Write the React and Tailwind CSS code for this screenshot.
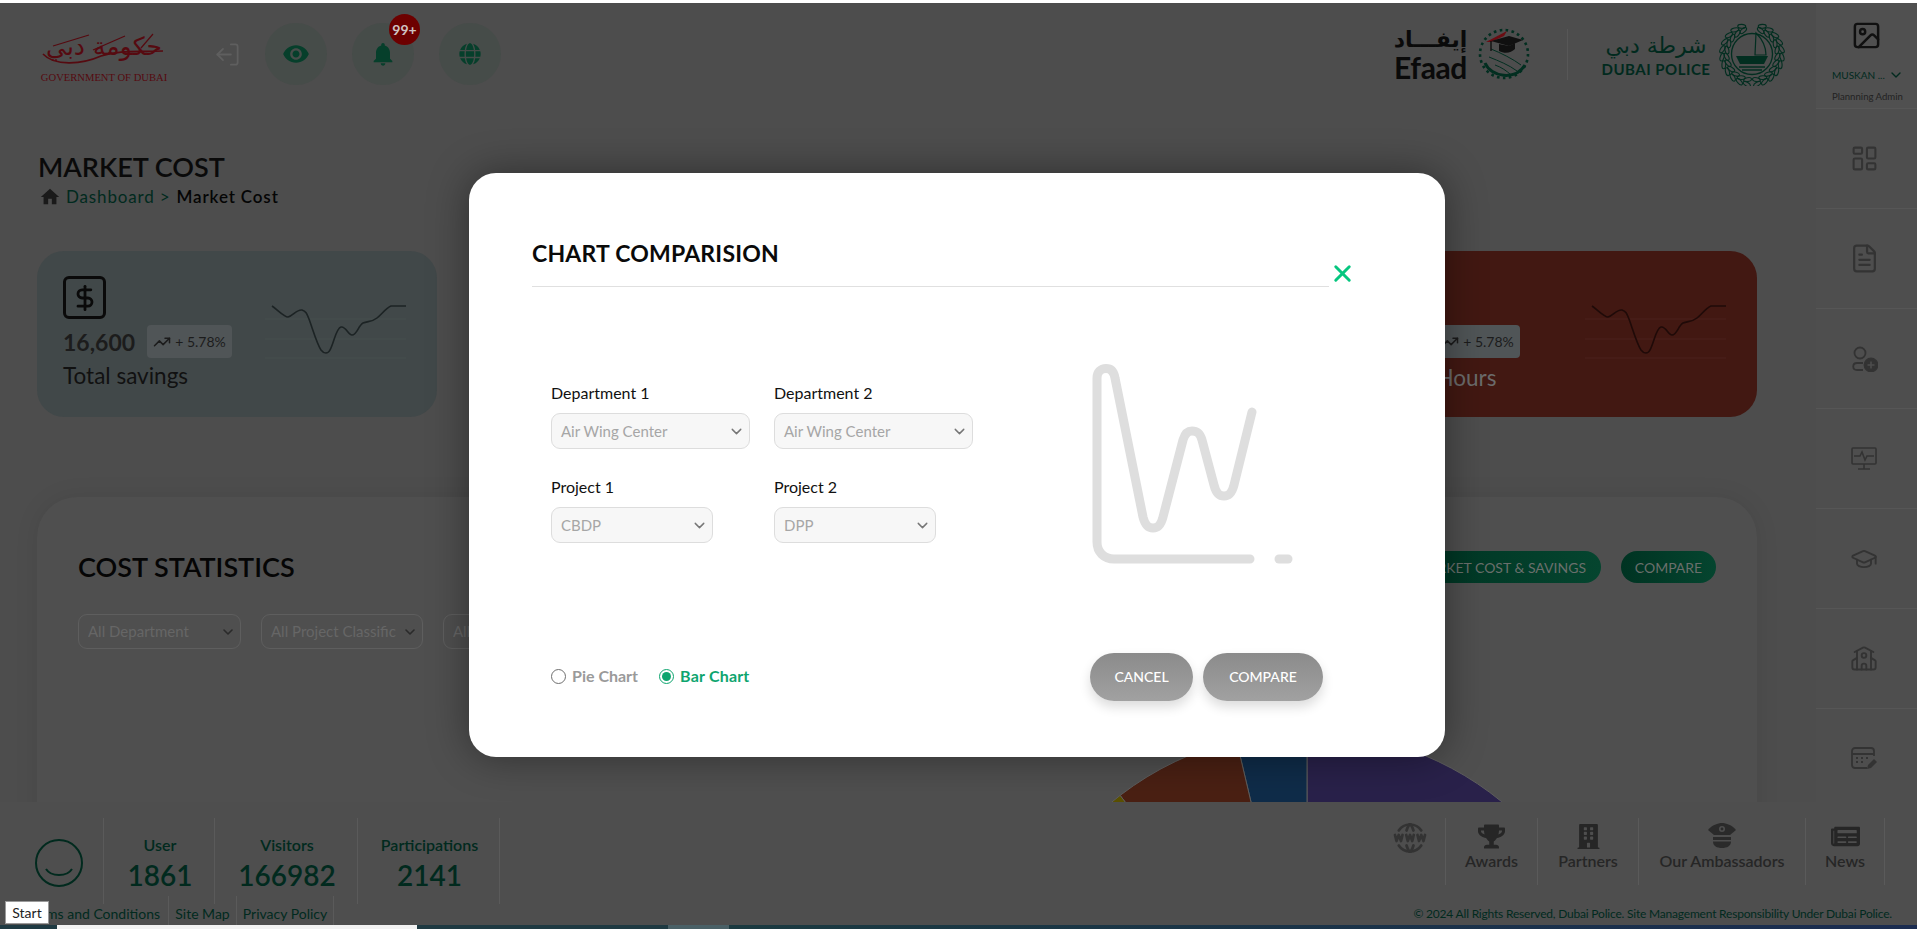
import React from "react";
import { LogOut, ChevronDown, Image as ImageIcon, LayoutDashboard, FileText, GraduationCap, School, X, TrendingUp, DollarSign } from "lucide-react";
import { MdVisibility, MdNotifications, MdHome } from "react-icons/md";
import { FaGlobe, FaTrophy, FaBuilding, FaNewspaper } from "react-icons/fa";
import { TbWorldWww } from "react-icons/tb";

const ARABIC = { fontFamily: '"DejaVu Sans", sans-serif' };

function Spark({ dark }) {
  const grid = dark ? "#4a211c" : "#464e4f";
  return (
    <svg width="145" height="62" viewBox="265 300 145 62" fill="none">
      <path d="M265 319H406M265 339H406M265 358H406" stroke={grid} strokeWidth="1" />
      <path
        d="M272 306 C278 310 284 317 288 317 C293 316 297 309 302 310 C306 311 307 314 309 319 C313 330 317 344 321 350 C324 354 328 354 330 350 C334 343 336 328 341 327 C346 326 348 335 352 335 C357 335 358 326 363 323 C368 321 372 322 377 318 C382 314 386 308 391 306 L406 306"
        stroke={dark ? "#1f0a08" : "#1c2324"}
        strokeWidth="1.6"
      />
    </svg>
  );
}

function StatCard({ bg, number, numberWidth, label, labelColor, labelMargin, dark }) {
  return (
    <div className={`flex h-[166px] w-[400px] rounded-[27px] pl-[26px] pt-[25px] ${bg}`}>
      <div className="w-[202px] shrink-0">
        <div className="flex h-[43px] w-[43px] items-center justify-center rounded-[6px] border-[3px] border-[#0a0a0a]">
          <DollarSign size={28} strokeWidth={2.4} color="#0a0a0a" />
        </div>
        <div className="mt-[6px] flex h-[33px] items-center">
          <span className={`text-[23px] font-bold leading-[28px] text-[#1c1c1c] ${numberWidth}`}>{number}</span>
          <span className="ml-[12px] flex h-[33px] w-[85px] shrink-0 items-center justify-center gap-[4px] rounded-[4px] bg-[#505557] text-[14px] text-[#1c1c1c]">
            <TrendingUp size={18} strokeWidth={2} color="#1c1c1c" />
            + 5.78%
          </span>
        </div>
        <div className={`text-[22.5px] leading-[28px] ${labelColor} ${labelMargin}`}>{label}</div>
      </div>
      <div className="mt-[24px] shrink-0">
        <Spark dark={dark} />
      </div>
    </div>
  );
}

function Pie() {
  return (
    <svg width="614" height="614" viewBox="0 0 614 614" className="ml-[963px] mt-[83px] block">
      <path d="M307 307L307 0A307 307 0 0 1 307 614Z" fill="#29214a" stroke="#5d5d5d" />
      <path d="M307 307L307 0A307 307 0 0 0 236.4 8.2Z" fill="#0f2c49" stroke="#5d5d5d" />
      <path d="M307 307L236.4 8.2A307 307 0 0 0 120.1 63.4Z" fill="#4a2013" stroke="#5d5d5d" />
      <path d="M307 307L120.1 63.4A307 307 0 0 0 101.6 78.9Z" fill="#5a5000" stroke="#5d5d5d" />
    </svg>
  );
}

function BgSelect({ text, w }) {
  return (
    <div className={`flex h-[35px] shrink-0 items-center justify-between rounded-[9px] border border-[#5e5e5e] pl-[9px] pr-[4px] text-[15px] text-[#666] ${w}`}>
      <span className="truncate">{text}</span>
      <ChevronDown size={16} strokeWidth={2.4} color="#2a2a2a" className="shrink-0" />
    </div>
  );
}

function ModalSelect({ text, w }) {
  return (
    <div className={`flex h-[36px] items-center justify-between rounded-[9px] border border-[#dddddd] bg-[#f7f7f7] pl-[9px] pr-[4px] text-[15px] text-[#a6a6a6] ${w}`}>
      <span>{text}</span>
      <ChevronDown size={17} strokeWidth={2} color="#777" />
    </div>
  );
}

function Field({ label, text, w }) {
  return (
    <div className="w-[199px]">
      <div className="mb-[8px] text-[16px] leading-[24px] text-[#111]">{label}</div>
      <ModalSelect text={text} w={w} />
    </div>
  );
}

function GovLogo() {
  return (
    <div className="flex w-[126px] shrink-0 flex-col items-center pt-[6px]">
      <svg width="126" height="40" viewBox="0 0 126 40" fill="none">
        <path d="M2 24 C14 37 42 34 60 26 C78 20 96 22 122 21" stroke="#560a10" strokeWidth="1.6" />
        <path d="M12 16 L48 5 M52 20 L84 6 M100 18 L112 4" stroke="#560a10" strokeWidth="1.2" />
        <text x="63" y="25" textAnchor="middle" fontSize="25" fill="#560a10" style={ARABIC}>حكومة دبي</text>
      </svg>
      <div className="mt-[1px] whitespace-nowrap text-[10.6px] leading-[14px] text-[#560a10]" style={{ fontFamily: '"Liberation Serif", serif' }}>GOVERNMENT OF DUBAI</div>
    </div>
  );
}

function EfaadEmblem() {
  return (
    <svg width="54" height="54" viewBox="0 0 54 54" fill="none" className="shrink-0">
      <circle cx="27" cy="27" r="24" stroke="#022e20" strokeWidth="2.6" strokeDasharray="2.6 3.4" />
      <path d="M8 36 C14 50 38 54 48 38" stroke="#022e20" strokeWidth="3" />
      <path d="M12 30 C22 34 32 38 40 44 M14 22 C24 26 36 32 44 38 M18 38 C24 40 30 44 34 48" stroke="#022e20" strokeWidth="1" />
      <path d="M9 15 L30 4 L27 9 L14 15Z" fill="#6b0c12" />
      <path d="M14 14 L32 9 L46 13 L32 19Z" fill="#101010" />
      <path d="M22 17 V24 C28 27 34 26 38 22 V16 L32 19Z" fill="#101010" />
      <path d="M14 14 V24" stroke="#101010" strokeWidth="1.4" />
    </svg>
  );
}

function PoliceEmblem() {
  const leaves = [];
  for (let t = 100; t <= 250; t += 15) {
    const a = (t * Math.PI) / 180;
    [[25.5, -22], [30, 22]].forEach(([r, tilt]) => {
      leaves.push({ x: 33 + r * Math.cos(a), y: 31.500 + r * Math.sin(a), rot: t - 180 + tilt });
    });
  }
  return (
    <svg width="66" height="63" viewBox="0 0 66 63" fill="none" className="shrink-0">
      {leaves.map((p, i) => (
        <g key={i}>
          <ellipse cx={p.x} cy={p.y} rx="1.9" ry="4" transform={`rotate(${p.rot} ${p.x} ${p.y})`} stroke="#022e20" strokeWidth="1.1" />
          <ellipse cx={66 - p.x} cy={p.y} rx="1.9" ry="4" transform={`rotate(${-p.rot} ${66 - p.x} ${p.y})`} stroke="#022e20" strokeWidth="1.1" />
        </g>
      ))}
      <circle cx="33" cy="31" r="20.500" stroke="#022e20" strokeWidth="1.3" />
      <path d="M37 10 C44 17 47 24 47 32 L36 32 Z" stroke="#022e20" strokeWidth="1.2" />
      <path d="M17 33 H49 L45 41 H21Z" fill="#022e20" />
      <path d="M20 44H46M23 47H43" stroke="#022e20" strokeWidth="1.6" />
    </svg>
  );
}

function IconUserPlus() {
  return (
    <svg width="28" height="26" viewBox="0 0 28 26" fill="none" stroke="#333" strokeWidth="1.8">
      <circle cx="10" cy="7" r="5.5" />
      <path d="M13 17 H7 C2 17 2 24 7 24 H13" />
      <circle cx="21" cy="19" r="6.5" fill="#333" />
      <path d="M21 15.5V22.5M17.5 19H24.5" stroke="#4d4d4d" strokeWidth="1.6" />
    </svg>
  );
}

function IconMonitor() {
  return (
    <svg width="26" height="24" viewBox="0 0 26 24" fill="none" stroke="#333" strokeWidth="1.6">
      <rect x="1" y="1" width="24" height="16" rx="1" />
      <path d="M3 9H9L11 5L14 13L16 9H23M13 17V22M7 22H19" />
    </svg>
  );
}

function IconCalendar() {
  return (
    <svg width="26" height="24" viewBox="0 0 26 24" fill="none" stroke="#333" strokeWidth="1.8">
      <path d="M16 21H4C2.5 21 1 20 1 18V4C1 2.5 2.5 1 4 1H20C22 1 23 2.500 23 4V9M1 7H23" />
      <path d="M5 11H7M10 11H12M15 11H17M5 15H7M10 15H12" />
      <path d="M16 22L17 18L23 12L26 15L20 21Z" fill="#333" stroke="none" />
    </svg>
  );
}

function IconPoliceCap() {
  return (
    <svg width="28" height="26" viewBox="0 0 28 26" fill="#2a2a2a">
      <path d="M0 7C4 2 10 0 14 0C18 0 24 2 28 7L22 12H6Z" />
      <circle cx="14" cy="6" r="3" fill="#4e4e4e" />
      <circle cx="14" cy="6" r="1.4" />
      <path d="M5 14H23V17H5ZM5 18.500H23C23 23 19 25 14 25C9 25 5 23 5 18.500Z" />
    </svg>
  );
}

function SideRow({ children }) {
  return <div className="flex h-[100px] items-center justify-center border-b border-[#565656] pr-[5px]">{children}</div>;
}

function Stat({ label, value, w }) {
  return (
    <div className={`flex flex-col items-center border-r border-[#5a5a5a] pl-[2px] pt-[15px] text-[#012a1e] ${w}`}>
      <div className="text-[16px] font-semibold leading-[24px]">{label}</div>
      <div className="text-[28px] font-semibold leading-[36px]">{value}</div>
    </div>
  );
}

function FootLink({ icon, label, w }) {
  return (
    <div className={`flex flex-col items-center border-r border-[#5a5a5a] pt-[5px] text-[#262626] ${w}`}>
      <div className="flex h-[26px] items-center justify-center">{icon}</div>
      <div className="text-[16px] font-semibold leading-[24px]">{label}</div>
    </div>
  );
}

function Circle({ children, badge }) {
  return (
    <div className="relative flex h-[62px] w-[62px] items-center justify-center rounded-full bg-[#464c49]">
      {children}
      {badge && (
        <div className="absolute left-[37px] top-[-9px] flex h-[31px] w-[31px] items-center justify-center rounded-full bg-[#6d0000] text-[14px] font-bold text-[#d0c4c4]">{badge}</div>
      )}
    </div>
  );
}

export default function App() {
  return (
    <div className="relative flex h-[929px] w-[1917px] flex-col overflow-hidden bg-[#4d4d4d]" style={{ fontFamily: 'Lato, "Open Sans", sans-serif' }}>
      <div className="h-[3px] shrink-0 bg-white" />

      <div className="flex min-h-0 flex-1">
        <main className="min-w-0 flex-1 overflow-hidden">
          <header className="flex h-[102px] items-center pl-[41px] pr-[31px]">
            <GovLogo />
            <LogOut size={27} strokeWidth={1.6} color="#5f5f5f" className="ml-[47px] mr-[24px] -scale-x-100" />
            <div className="flex gap-[25px]">
              <Circle><MdVisibility size={28} color="#063f2b" /></Circle>
              <Circle badge="99+"><MdNotifications size={28} color="#063f2b" /></Circle>
              <Circle><FaGlobe size={22} color="#063f2b" /></Circle>
            </div>
            <div className="ml-auto flex items-center">
              <div className="flex w-[69px] flex-col items-center font-bold text-[#0a0a0a]">
                <span className="whitespace-nowrap text-[22px] leading-[26px]" style={ARABIC}>إيفـــاد</span>
                <span className="text-[30px] leading-[28px] tracking-[-0.4px]">Efaad</span>
              </div>
              <div className="ml-[12px]"><EfaadEmblem /></div>
              <div className="mx-[36px] h-[51px] w-px bg-[#575757]" />
              <div className="flex w-[104px] flex-col items-center text-[#012a1e]">
                <span className="whitespace-nowrap text-[22px] leading-[29px]" style={ARABIC}>شرطة دبي</span>
                <span className="whitespace-nowrap text-[15px] font-bold leading-[18px] tracking-[0.5px]">DUBAI POLICE</span>
              </div>
              <div className="ml-[11px]"><PoliceEmblem /></div>
            </div>
          </header>

          <div className="pl-[37px] pr-[59px]">
            <h1 className="mt-[46px] pl-px text-[27px] font-semibold leading-[32px] text-[#0a0a0a]">MARKET COST</h1>
            <div className="mt-[2px] flex h-[24px] items-center pl-[2px] text-[17px] tracking-[0.85px]">
              <MdHome size={22} color="#1a1a1a" />
              <span className="ml-[5px] text-[#012a1e]">Dashboard &gt;</span>
              <span className="ml-[6px] font-semibold text-[#050505]">Market Cost</span>
            </div>

            <div className="mt-[42px] flex justify-between">
              <StatCard bg="bg-[#414849]" number="16,600" numberWidth="w-[72px]" label="Total savings" labelColor="text-[#111]" labelMargin="mt-[4px]" />
              <div className="h-[166px] w-[400px] rounded-[27px] bg-[#3f4648]" />
              <StatCard bg="bg-[#421812]" number="470" numberWidth="w-[40px]" label="Total Hours" labelColor="text-[#6b6b6b]" labelMargin="mt-[6px]" dark />
            </div>

            <section className="mt-[80px] h-[600px] overflow-hidden rounded-[40px] bg-[#4f4f4f] pt-[52px] shadow-[0_0_24px_rgba(0,0,0,0.08)]">
              <div className="flex h-[36px] items-center justify-between pl-[41px] pr-[41px]">
                <h2 className="text-[27px] font-semibold leading-[36px] text-[#050505]">COST STATISTICS</h2>
                <div className="flex gap-[20px]">
                  <div className="flex h-[32px] items-center rounded-full bg-gradient-to-r from-[#003322] to-[#05452f] px-[15px] text-[14px] text-[#6a6f6c]">MARKET COST &amp; SAVINGS</div>
                  <div className="flex h-[32px] w-[95px] items-center justify-center rounded-full bg-gradient-to-r from-[#003322] to-[#05452f] text-[14px] text-[#6a6f6c]">COMPARE</div>
                </div>
              </div>
              <div className="mt-[29px] flex gap-[20px] pl-[41px]">
                <BgSelect text="All Department" w="w-[163px]" />
                <BgSelect text="All Project Classific" w="w-[162px]" />
                <BgSelect text="All Projects" w="w-[162px]" />
              </div>
              <Pie />
            </section>
          </div>
        </main>

        <aside className="w-[101px] shrink-0 bg-[#4e4e4e]">
          <div className="flex h-[106px] flex-col border-b border-[#565656] bg-[#505050] pl-[16px] pt-[17px]">
            <div className="flex justify-center pr-[16px]"><ImageIcon size={31} strokeWidth={1.9} color="#101010" /></div>
            <div className="mt-[16px] flex h-[16px] items-center gap-[3px] text-[10px] text-[#012a1e]">
              <span>MUSKAN ...</span>
              <ChevronDown size={16} strokeWidth={2} color="#012a1e" />
            </div>
            <div className="mt-[6px] whitespace-nowrap text-[9.6px] leading-[16px] text-[#222]">Plannning Admin</div>
          </div>
          <SideRow><LayoutDashboard size={29} strokeWidth={1.7} color="#333" className="-scale-x-100" /></SideRow>
          <SideRow><FileText size={31} strokeWidth={1.7} color="#333" /></SideRow>
          <SideRow><IconUserPlus /></SideRow>
          <SideRow><IconMonitor /></SideRow>
          <SideRow><GraduationCap size={28} strokeWidth={1.6} color="#333" /></SideRow>
          <SideRow><School size={28} strokeWidth={1.6} color="#333" /></SideRow>
          <SideRow><IconCalendar /></SideRow>
        </aside>
      </div>

      <footer className="flex h-[123px] shrink-0 justify-between bg-[#4e4e4e]">
        <div className="pt-[16px]">
          <div className="flex h-[86px]">
            <div className="flex w-[104px] items-start border-r border-[#5a5a5a] pl-[35px] pt-[21px]">
              <svg width="48" height="48" viewBox="0 0 48 48" fill="none" stroke="#012a1e" strokeWidth="2">
                <circle cx="24" cy="24" r="23" />
                <path d="M11 30C16 38 32 38 37 30" />
              </svg>
            </div>
            <Stat label="User" value="1861" w="w-[111px]" />
            <Stat label="Visitors" value="166982" w="w-[143px]" />
            <Stat label="Participations" value="2141" w="w-[142px]" />
          </div>
          <div className="-mt-[8px] flex h-[29px] text-[14px] leading-[36px] text-[#012a1e]">
            <div className="w-[169px] whitespace-nowrap border-r border-[#5a5a5a] pr-[8px] text-right">Terms and Conditions</div>
            <div className="w-[68px] whitespace-nowrap border-r border-[#5a5a5a] text-center">Site Map</div>
            <div className="w-[97px] whitespace-nowrap border-r border-[#5a5a5a] text-center">Privacy Policy</div>
          </div>
        </div>
        <div className="flex flex-col items-end pr-[25px] pt-[16px]">
          <div className="mr-[7px] flex h-[67px]">
            <div className="flex w-[71px] items-start justify-center border-r border-[#5a5a5a] pt-[2px]"><TbWorldWww size={36} strokeWidth={1.8} color="#333" /></div>
            <FootLink icon={<FaTrophy size={27} color="#262626" />} label="Awards" w="w-[92px]" />
            <FootLink icon={<FaBuilding size={25} color="#262626" />} label="Partners" w="w-[101px]" />
            <FootLink icon={<IconPoliceCap />} label="Our Ambassadors" w="w-[167px]" />
            <FootLink icon={<FaNewspaper size={29} color="#262626" />} label="News" w="w-[79px]" />
          </div>
          <div className="mt-[19px] whitespace-nowrap text-[12px] leading-[20px] tracking-[-0.2px] text-[#012a1e]">© 2024 All Rights Reserved, Dubai Police. Site Management Responsibility Under Dubai Police.</div>
        </div>
      </footer>

      <div className="flex h-[4px] shrink-0">
        <div className="w-[57px] bg-[#1f3a42]" />
        <div className="w-[360px] bg-[#f2f2f2]" />
        <div className="w-[251px] bg-[#1f3a42]" />
        <div className="w-[61px] bg-[#4a6066]" />
        <div className="flex-1 bg-gradient-to-r from-[#1b3a40] to-[#1b2c50]" />
      </div>

      <div className="absolute left-[5px] top-[901px] flex h-[23px] w-[44px] items-center justify-center border border-[#9a9a9a] bg-white text-[14px] text-[#222]">Start</div>

      <div className="absolute left-[469px] top-[173px] h-[584px] w-[976px] rounded-[27px] bg-white shadow-[0_0_40px_rgba(0,0,0,0.4)]">
        <div className="flex pl-[63px]">
          <div className="h-[114px] w-[797px] border-b border-[#e0e0e0] pt-[64px]">
            <h3 className="text-[23px] font-bold leading-[32px] tracking-[0.2px] text-[#0a0a0a]">CHART COMPARISION</h3>
          </div>
          <X size={27} strokeWidth={2.6} color="#06c67f" className="mb-[0px] self-end" />
        </div>

        <div className="mt-[70px] flex h-[186px]">
          <div className="w-[621px] pl-[82px] pt-[24px]">
            <div className="flex gap-[24px]">
              <Field label="Department 1" text="Air Wing Center" w="w-[199px]" />
              <Field label="Department 2" text="Air Wing Center" w="w-[199px]" />
            </div>
            <div className="mt-[26px] flex gap-[24px]">
              <Field label="Project 1" text="CBDP" w="w-[162px]" />
              <Field label="Project 2" text="DPP" w="w-[162px]" />
            </div>
          </div>
          <svg width="205" height="210" viewBox="1090 357 205 210" fill="none" stroke="#dedede" strokeWidth="9" strokeLinecap="round" strokeLinejoin="round" className="shrink-0">
            <path d="M1250 559H1114C1104 559 1097 552 1097 542V378C1097 372 1101 368.500 1106 368.500C1111 368.500 1114 372 1115 378L1143 517C1145 525 1148 528 1153 528C1158 528 1161 525 1163 517L1183 440C1185 433 1188 431 1192 431C1197 431 1200 433 1202 440L1214 485C1216 493 1219 496 1224 496C1229 496 1232 493 1234 485L1252 412" />
            <path d="M1279 559H1288" />
          </svg>
        </div>

        <div className="mt-[110px] flex h-[48px] items-center pl-[82px] pr-[122px]">
          <div className="flex items-center pb-[2px]">
            <div className="h-[15px] w-[15px] rounded-full border-[1.5px] border-[#6f6f6f] bg-white" />
            <span className="ml-[6px] text-[16px] font-bold text-[#9a9a9a]">Pie Chart</span>
            <div className="ml-[21px] flex h-[15px] w-[15px] items-center justify-center rounded-full border-[1.5px] border-[#0ea56f]">
              <div className="h-[9px] w-[9px] rounded-full bg-[#0ea56f]" />
            </div>
            <span className="ml-[6px] text-[16px] font-bold tracking-[0.2px] text-[#0ea56f]">Bar Chart</span>
          </div>
          <div className="ml-auto flex gap-[10px]">
            <div className="flex h-[48px] w-[103px] items-center justify-center rounded-[24px] bg-gradient-to-b from-[#8b8b8b] to-[#a1a1a1] pb-[1px] text-[14px] font-medium text-white shadow-[0_6px_12px_rgba(0,0,0,0.14)]">CANCEL</div>
            <div className="flex h-[48px] w-[120px] items-center justify-center rounded-[24px] bg-gradient-to-b from-[#8b8b8b] to-[#a1a1a1] pb-[1px] text-[14px] font-medium text-white shadow-[0_6px_12px_rgba(0,0,0,0.14)]">COMPARE</div>
          </div>
        </div>
      </div>
    </div>
  );
}
